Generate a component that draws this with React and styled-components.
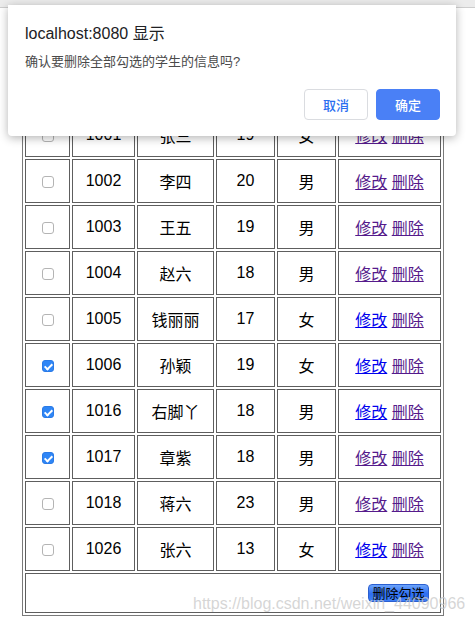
import React from 'react';
import styled, { createGlobalStyle } from 'styled-components';

const students = [
  { id: '1001', name: '张三', age: 19, sex: '女', checked: false, editSeen: true },
  { id: '1002', name: '李四', age: 20, sex: '男', checked: false, editSeen: true },
  { id: '1003', name: '王五', age: 19, sex: '男', checked: false, editSeen: true },
  { id: '1004', name: '赵六', age: 18, sex: '男', checked: false, editSeen: true },
  { id: '1005', name: '钱丽丽', age: 17, sex: '女', checked: false, editSeen: false },
  { id: '1006', name: '孙颖', age: 19, sex: '女', checked: true, editSeen: false },
  { id: '1016', name: '右脚丫', age: 18, sex: '男', checked: true, editSeen: false },
  { id: '1017', name: '章紫', age: 18, sex: '男', checked: true, editSeen: true },
  { id: '1018', name: '蒋六', age: 23, sex: '男', checked: false, editSeen: true },
  { id: '1026', name: '张六', age: 13, sex: '女', checked: false, editSeen: false },
];

const widths = [45, 63, 77, 59, 59, 103];

const App = () => {
  return (
    <Page>
      <GlobalStyle />
      <TopBar />
      <Content>
        <Table>
          <colgroup>
            {widths.map((w, i) => (
              <col key={i} style={{ width: w }} />
            ))}
          </colgroup>
          <tbody>
            <tr>
              <Cell><Check type="checkbox" /></Cell>
              <Cell>学号</Cell>
              <Cell>姓名</Cell>
              <Cell>年龄</Cell>
              <Cell>性别</Cell>
              <Cell>操作</Cell>
            </tr>
            {students.map((s) => (
              <tr key={s.id}>
                <Cell>
                  <Check type="checkbox" defaultChecked={s.checked} />
                </Cell>
                <Cell>{s.id}</Cell>
                <Cell>{s.name}</Cell>
                <Cell>{s.age}</Cell>
                <Cell>{s.sex}</Cell>
                <Cell>
                  <Link href="#" $visited={s.editSeen}>修改</Link>{' '}
                  <Link href="#" $visited>删除</Link>
                </Cell>
              </tr>
            ))}
            <tr>
              <FootCell colSpan={6}>
                <DeleteButton>删除勾选</DeleteButton>
              </FootCell>
            </tr>
          </tbody>
        </Table>
      </Content>
      <Watermark>https://blog.csdn.net/weixin_44090966</Watermark>
      <Dialog>
        <DialogTitle>localhost:8080 显示</DialogTitle>
        <DialogText>确认要删除全部勾选的学生的信息吗?</DialogText>
        <DialogActions>
          <DialogButton>取消</DialogButton>
          <DialogButton $primary>确定</DialogButton>
        </DialogActions>
      </Dialog>
    </Page>
  );
};

const GlobalStyle = createGlobalStyle`
  body {
    margin: 0;
    background: #fff;
    font-family: "Liberation Sans", "Noto Sans CJK SC", sans-serif;
  }
`;

const Page = styled.div`
  position: relative;
  width: 475px;
  height: 623px;
  overflow: hidden;
  background: #fff;
`;

const TopBar = styled.div`
  height: 7px;
  background: #ececec;
  border-bottom: 1px solid #cdcdcd;
`;

const Content = styled.div`
  padding: 56px 0 0 22px;
`;

const Table = styled.table`
  table-layout: fixed;
  width: 422px;
  border-collapse: separate;
  border-spacing: 2px;
  border: 1px solid #7a7a7a;
`;

const Cell = styled.td`
  height: 42px;
  padding: 0;
  border: 1px solid #5e5e5e;
  text-align: center;
  vertical-align: middle;
  font-size: 16px;
  color: #000;
  white-space: nowrap;
`;

const FootCell = styled(Cell)`
  height: 38px;
  text-align: right;
  padding-right: 11px;
`;

const Check = styled.input`
  appearance: none;
  width: 12px;
  height: 12px;
  margin: 0;
  border: 1px solid #b4b4b4;
  border-radius: 3px;
  background: #fff;
  position: relative;
  vertical-align: middle;

  &:checked {
    background: #2f86f6;
    border-color: #2a7ae6;
  }
  &:checked::after {
    content: '';
    position: absolute;
    left: 3px;
    top: 1px;
    width: 3px;
    height: 6px;
    border: solid #fff;
    border-width: 0 2px 2px 0;
    transform: rotate(45deg);
  }
`;

const Link = styled.a`
  color: ${({ $visited }) => ($visited ? '#551a8b' : '#0000ee')};
  text-decoration: underline;
`;

const DeleteButton = styled.button`
  height: 18px;
  width: 61px;
  padding: 0;
  border: 1px solid #2b5fd0;
  border-radius: 4px;
  background: linear-gradient(#6ca4fb, #2f6ff0 55%, #3d7ff7);
  color: #000;
  font-size: 13px;
  font-family: "Noto Sans CJK SC", sans-serif;
  line-height: 16px;
  vertical-align: middle;
`;

const Watermark = styled.div`
  position: absolute;
  left: 193px;
  top: 595px;
  font-size: 16px;
  color: rgba(200, 200, 200, 0.75);
  font-family: "Liberation Sans", sans-serif;
  white-space: nowrap;
  pointer-events: none;
`;

const Dialog = styled.div`
  position: absolute;
  left: 8px;
  top: 5px;
  width: 448px;
  height: 131px;
  box-sizing: border-box;
  padding: 20px 16px 0 17px;
  background: #fff;
  border-radius: 0 0 4px 4px;
  box-shadow: 0 2px 10px rgba(0, 0, 0, 0.3);
`;

const DialogTitle = styled.div`
  font-size: 16px;
  color: #202124;
  line-height: 18px;
`;

const DialogText = styled.div`
  margin-top: 11px;
  font-size: 13px;
  color: #4a4a4a;
  line-height: 16px;
`;

const DialogActions = styled.div`
  display: flex;
  justify-content: flex-end;
  gap: 8px;
  margin-top: 19px;
`;

const DialogButton = styled.button`
  width: 64px;
  height: 31px;
  border-radius: 4px;
  font-size: 13px;
  font-weight: 500;
  font-family: "Noto Sans CJK SC", sans-serif;
  border: 1px solid ${({ $primary }) => ($primary ? '#4a80f6' : '#dadce0')};
  background: ${({ $primary }) => ($primary ? '#4a80f6' : '#fff')};
  color: ${({ $primary }) => ($primary ? '#fff' : '#2a6ef0')};
`;

export default App;
